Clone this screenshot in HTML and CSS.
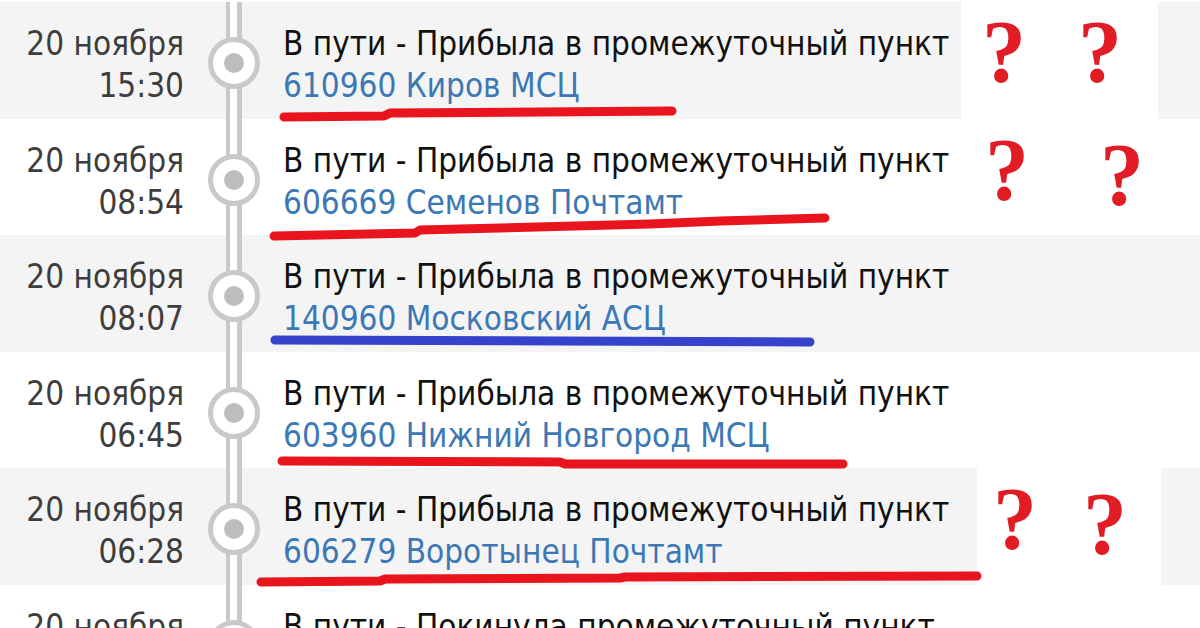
FILE: index.html
```html
<!DOCTYPE html>
<html lang="ru">
<head>
<meta charset="utf-8">
<title>Отслеживание</title>
<link rel="stylesheet" href="styles.css">
</head>
<body>
<div class="page">
  <div class="row alt">
    <div class="date">20 ноября<br>15:30</div>
    <div class="axis"><div class="node"><div class="dot"></div></div></div>
    <div class="event">В пути - Прибыла в промежуточный пункт<br><span class="place">610960 Киров МСЦ</span></div>
    <div class="notes notes-1"><span class="q">?</span><span class="q">?</span></div>
  </div>
  <div class="row">
    <div class="date">20 ноября<br>08:54</div>
    <div class="axis"><div class="node"><div class="dot"></div></div></div>
    <div class="event">В пути - Прибыла в промежуточный пункт<br><span class="place">606669 Семенов Почтамт</span></div>
    <div class="notes notes-2"><span class="q">?</span><span class="q q-low">?</span></div>
  </div>
  <div class="row alt">
    <div class="date">20 ноября<br>08:07</div>
    <div class="axis"><div class="node"><div class="dot"></div></div></div>
    <div class="event">В пути - Прибыла в промежуточный пункт<br><span class="place">140960 Московский АСЦ</span></div>
  </div>
  <div class="row">
    <div class="date">20 ноября<br>06:45</div>
    <div class="axis"><div class="node"><div class="dot"></div></div></div>
    <div class="event">В пути - Прибыла в промежуточный пункт<br><span class="place">603960 Нижний Новгород МСЦ</span></div>
  </div>
  <div class="row alt">
    <div class="date">20 ноября<br>06:28</div>
    <div class="axis"><div class="node"><div class="dot"></div></div></div>
    <div class="event">В пути - Прибыла в промежуточный пункт<br><span class="place">606279 Воротынец Почтамт</span></div>
    <div class="notes notes-5"><span class="q">?</span><span class="q q-low">?</span></div>
  </div>
  <div class="row">
    <div class="date">20 ноября<br>05:10</div>
    <div class="axis"><div class="node"><div class="dot"></div></div></div>
    <div class="event">В пути - Покинула промежуточный пункт<br><span class="place">606279 Воротынец Почтамт</span></div>
  </div>

  <svg class="marks" width="1200" height="628" viewBox="0 0 1200 628" aria-hidden="true">
    <polyline class="mark-red" points="284,117 384,116 390,113 672,111"/>
    <polyline class="mark-red" points="274,236 415,233 420,230 650,224 720,221 825,218"/>
    <polyline class="mark-blue" points="275,340 560,341 810,342"/>
    <polyline class="mark-red" points="282,461 560,462 565,464 843,464"/>
    <polyline class="mark-red" points="261,582 380,581 385,579 620,578 625,577 977,576"/>
  </svg>
</div>
</body>
</html>
```
FILE: styles.css
```css
html, body {
  margin: 0;
  padding: 0;
  overflow: hidden;
  background: #fff;
}

.page {
  position: relative;
  width: 1200px;
  height: 628px;
  overflow: hidden;
  box-sizing: border-box;
  padding-top: 2px;
  font-family: "DejaVu Sans", sans-serif;
  font-stretch: condensed;
}

.row {
  display: flex;
  height: 116.6px;
}

.row.alt {
  background: #f4f4f4;
}

.date {
  width: 184px;
  flex: none;
  box-sizing: border-box;
  padding-top: 21px;
  text-align: right;
  color: #3d3d3d;
  font-size: 33px;
  line-height: 42px;
  white-space: nowrap;
}

.axis {
  width: 99px;
  flex: none;
  background: linear-gradient(to right,
    transparent 42px,
    #c9c9c9 42px, #c9c9c9 46px,
    #fff 46px, #fff 53px,
    #c9c9c9 53px, #c9c9c9 58px,
    transparent 58px);
}

.node {
  width: 52px;
  height: 52px;
  box-sizing: border-box;
  border: 5px solid #c9c9c9;
  border-radius: 50%;
  background: #fff;
  margin: 35px 0 0 24px;
  display: flex;
  align-items: center;
  justify-content: center;
}

.dot {
  width: 20px;
  height: 20px;
  border-radius: 50%;
  background: #bdbdbd;
}

.event {
  width: 678px;
  flex: none;
  box-sizing: border-box;
  padding-top: 21px;
  font-size: 33px;
  line-height: 42px;
  color: #111;
  white-space: nowrap;
}

.place {
  color: #3b78b5;
}

.notes {
  display: flex;
  align-items: flex-start;
  box-sizing: border-box;
  background: #fff;
}

.q {
  font-family: "Liberation Serif", serif;
  font-weight: bold;
  font-size: 88px;
  line-height: 88px;
  color: #e21c24;
}

.q-low {
  margin-top: 5px;
}

.notes-1 {
  width: 197px;
  padding: 6px 0 0 21px;
  gap: 52px;
}

.notes-2 {
  width: 197px;
  padding: 7px 0 0 24px;
  gap: 71px;
}

.notes-5 {
  margin-left: 16px;
  width: 184px;
  padding: 7px 0 0 16px;
  gap: 46px;
}

.marks {
  position: absolute;
  left: 0;
  top: 0;
  pointer-events: none;
}

.marks polyline {
  fill: none;
  stroke-width: 9;
  stroke-linecap: round;
  stroke-linejoin: round;
}

.mark-red {
  stroke: #e8151e;
}

.mark-blue {
  stroke: #3442cc;
}
```
